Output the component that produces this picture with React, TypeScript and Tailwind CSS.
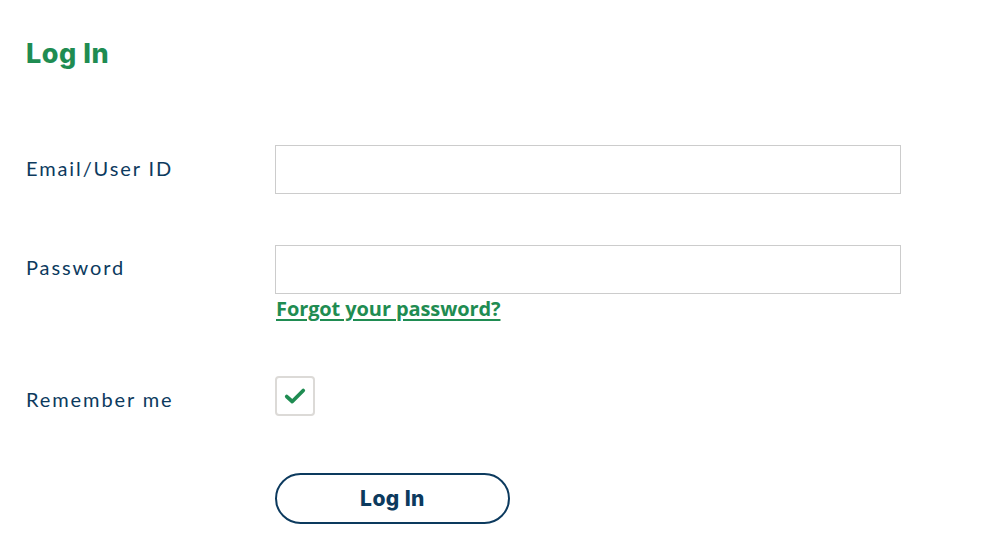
import { useState } from 'react';

const labelCls = 'w-[249px] shrink-0 text-[20px] tracking-[0.095em] text-[#0c3a5e] font-["Lato","Open_Sans",sans-serif]';
const inputCls = 'w-[626px] h-[49px] border border-[#cccccc] bg-white px-3 text-[18px] outline-none';

export default function App() {
  const [remember, setRemember] = useState(true);

  return (
    <div className="min-h-[546px] w-[987px] bg-white pl-[26px] pt-[36px] font-['Lato','Open_Sans',sans-serif]">
      <h1 className="text-[27px] font-extrabold leading-9 text-[#1f8c52] tracking-[0.02em] font-['Inter',sans-serif]">Log In</h1>

      <form className="mt-[73px] flex flex-col" onSubmit={e => e.preventDefault()}>
        {/* Email */}
        <div className="flex items-center">
          <label className={`${labelCls} pb-[4px]`}>Email/User ID</label>
          <input className={inputCls} type="text" />
        </div>

        {/* Password */}
        <div className="mt-[51px] flex items-start">
          <label className={`${labelCls} pt-[7px]`}>Password</label>
          <div className="flex flex-col">
            <input className={inputCls} type="password" />
            <a href="#" className="mt-[1px] w-fit pl-[1px] text-[20px] font-bold leading-7 text-[#1f8c52] underline underline-offset-[3px] decoration-2 font-['Open_Sans',sans-serif] tracking-[-0.005em]">
              Forgot your password?
            </a>
          </div>
        </div>

        {/* Remember me */}
        <div className="mt-[53px] flex items-center">
          <label className={`${labelCls} pt-[6px]`}>Remember me</label>
          <button
            type="button"
            onClick={() => setRemember(r => !r)}
            className="flex h-[40px] w-[40px] items-center justify-center rounded-[4px] border-2 border-[#dcdad7] bg-white"
          >
            {remember && (
              <svg width="22" height="18" viewBox="0 0 20 16" fill="none">
                <path d="M2.5 8.5 L7.5 13 L17.5 3" stroke="#1f8c52" strokeWidth="3.4" strokeLinecap="round" strokeLinejoin="round" />
              </svg>
            )}
          </button>
        </div>

        {/* Submit */}
        <div className="mt-[57px] flex">
          <div className="w-[249px] shrink-0" />
          <button
            type="submit"
            className="h-[51px] w-[235px] rounded-full border-2 border-[#0c3a5e] text-[21px] font-extrabold tracking-[0.02em] text-[#0c3a5e] font-['Inter',sans-serif]"
          >
            Log In
          </button>
        </div>
      </form>
    </div>
  );
}
